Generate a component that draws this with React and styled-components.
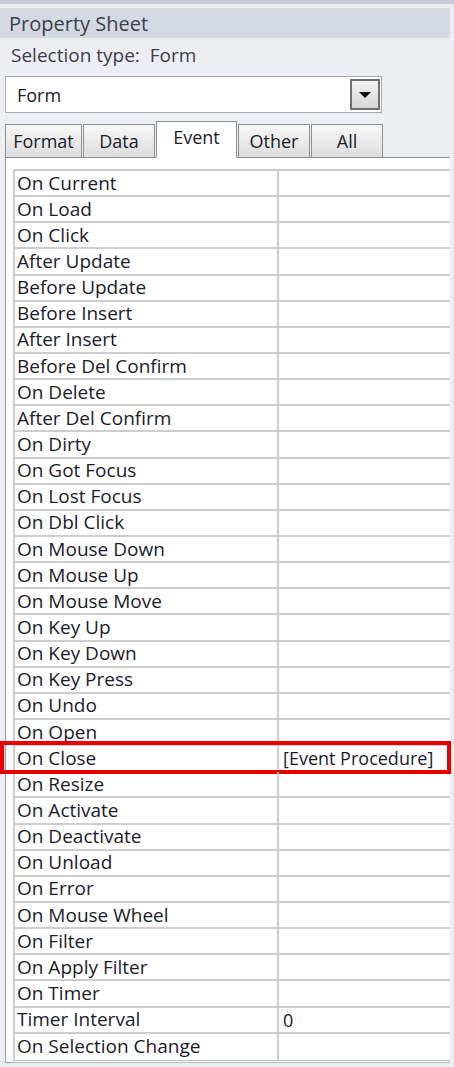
import React from 'react';
import styled, { createGlobalStyle } from 'styled-components';

const GlobalStyle = createGlobalStyle`
    body {
        margin: 0;
        background: #eceef2;
        font-family: "Open Sans", "Noto Sans", sans-serif;
    }
`;

const ROW_HEIGHT = 26.15;

const events = [
    'On Current', 'On Load', 'On Click', 'After Update', 'Before Update',
    'Before Insert', 'After Insert', 'Before Del Confirm', 'On Delete',
    'After Del Confirm', 'On Dirty', 'On Got Focus', 'On Lost Focus',
    'On Dbl Click', 'On Mouse Down', 'On Mouse Up', 'On Mouse Move',
    'On Key Up', 'On Key Down', 'On Key Press', 'On Undo', 'On Open',
    'On Close', 'On Resize', 'On Activate', 'On Deactivate', 'On Unload',
    'On Error', 'On Mouse Wheel', 'On Filter', 'On Apply Filter', 'On Timer',
    'Timer Interval', 'On Selection Change',
];

const values = {
    'On Close': '[Event Procedure]',
    'Timer Interval': '0',
};

const tabs = [
    { label: 'Format', width: 77 },
    { label: 'Data', width: 72 },
    { label: 'Event', width: 81 },
    { label: 'Other', width: 72 },
    { label: 'All', width: 72 },
];

// styled css components
const Panel = styled.div`
    width: 454px;
    height: 1067px;
    background: #eceef2;
    display: flex;
    flex-direction: column;
    color: #1b1b2a;
    overflow: hidden;
`;
const TopStrip = styled.div`
    height: 4px;
    background: #c8c9d9;
    margin-bottom: 4px;
`;
const TitleBar = styled.div`
    height: 30px;
    margin-right: 4px;
    background: #d4d9e1;
    display: flex;
    align-items: center;
    padding-left: 9px;
    font-size: 20px;
    color: #3d3d4d;
`;
const SelectionLine = styled.div`
    height: 34px;
    display: flex;
    align-items: center;
    padding-left: 11px;
    font-size: 19px;
    color: #3d3d4d;
    white-space: pre;
`;
const Combo = styled.div`
    margin: 4px 0 0 5px;
    width: 377px;
    height: 37px;
    box-sizing: border-box;
    background: #fff;
    border: 1px solid #a7a9ad;
    display: flex;
    align-items: center;
    justify-content: space-between;
    padding: 0 1px 0 11px;
    font-size: 18px;
`;
const DropButton = styled.div`
    width: 30px;
    height: 31px;
    box-sizing: border-box;
    border: 2px solid #6f6f72;
    background: linear-gradient(#f2f2f2, #d6d6d6);
    display: flex;
    align-items: center;
    justify-content: center;
`;
const Arrow = styled.div`
    width: 0;
    height: 0;
    border-left: 6px solid transparent;
    border-right: 6px solid transparent;
    border-top: 6px solid #111;
`;
const TabStrip = styled.div`
    margin: 8px 4px 0 5px;
    height: 36px;
    display: flex;
    align-items: flex-end;
    gap: 1px;
    border-bottom: 1px solid #8d8f93;
`;
const Tab = styled.div`
    width: ${props => props.width}px;
    height: ${props => props.active ? 37 : 33}px;
    margin-bottom: ${props => props.active ? -1 : 0}px;
    box-sizing: border-box;
    border: 1px solid #8d8f93;
    border-bottom: ${props => props.active ? '1px solid #fff' : 'none'};
    background: ${props => props.active ? '#fff' : 'linear-gradient(#f7f7f7, #dcdcdc)'};
    display: flex;
    align-items: ${props => props.active ? 'flex-start' : 'center'};
    padding-top: ${props => props.active ? 3 : 0}px;
    justify-content: center;
    font-size: 18px;
    color: #1b1b2a;
`;
const Frame = styled.div`
    margin: 0 4px 0 5px;
    height: 905px;
    box-sizing: border-box;
    background: #fff;
    border-left: 1px solid #9a9ca0;
    border-bottom: 1px solid #9a9ca0;
    padding: 11px 0 0 7px;
`;
const Grid = styled.div`
    border-top: 2px solid #cdcdcd;
    border-left: 2px solid #cdcdcd;
    border-bottom: 3px double #b8b8b8;
    display: flex;
    flex-direction: column;
`;
const Row = styled.div`
    position: relative;
    height: ${ROW_HEIGHT}px;
    box-sizing: border-box;
    display: grid;
    grid-template-columns: 264px 1fr;
    border-bottom: 2px solid #cdcdcd;
    font-size: 19px;
    line-height: 1;

    &:last-child {
        border-bottom: none;
    }

    ${props => props.highlighted && `
        &::after {
            content: '';
            position: absolute;
            left: -15px;
            right: -1px;
            top: -5px;
            bottom: -4px;
            border: 4px solid #e60000;
            pointer-events: none;
        }
    `}
`;
const Label = styled.div`
    display: flex;
    align-items: center;
    padding-left: 2px;
    border-right: 2px solid #cdcdcd;
    white-space: nowrap;
`;
const Value = styled.div`
    display: flex;
    align-items: center;
    padding-left: 4px;
    white-space: nowrap;
    font-size: 18px;
`;

const App = () => {
    return (
        <>
            <GlobalStyle />
            <Panel>
                <TopStrip />
                <TitleBar>Property Sheet</TitleBar>
                <SelectionLine>Selection type:  Form</SelectionLine>
                <Combo>
                    Form
                    <DropButton><Arrow /></DropButton>
                </Combo>
                <TabStrip>
                    {tabs.map(tab => (
                        <Tab key={tab.label} width={tab.width} active={tab.label === 'Event'}>
                            {tab.label}
                        </Tab>
                    ))}
                </TabStrip>
                <Frame>
                    <Grid>
                        {events.map(name => (
                            <Row key={name} highlighted={name === 'On Close'}>
                                <Label>{name}</Label>
                                <Value>{values[name] || ''}</Value>
                            </Row>
                        ))}
                    </Grid>
                </Frame>
            </Panel>
        </>
    );
};

export default App;
